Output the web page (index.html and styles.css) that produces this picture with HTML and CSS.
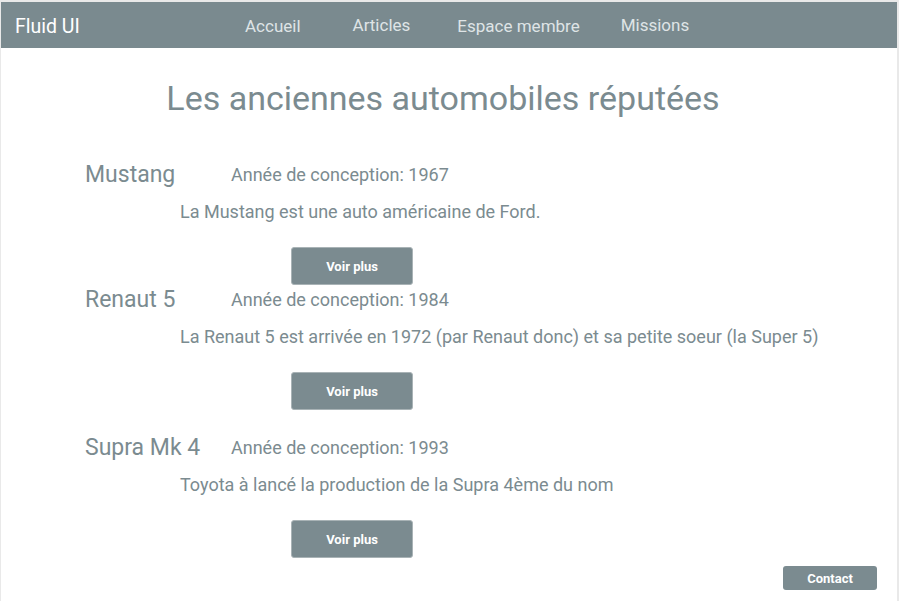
FILE: index.html
```html
<!DOCTYPE html>
<html lang="fr">
<head>
<meta charset="utf-8">
<title>Fluid UI</title>
<link rel="stylesheet" href="styles.css">
</head>
<body>
<div class="page">
  <header class="navbar">
    <div class="brand">Fluid UI</div>
    <nav class="links">
      <a class="link link-accueil" href="#">Accueil</a>
      <a class="link link-articles" href="#">Articles</a>
      <a class="link link-espace" href="#">Espace membre</a>
      <a class="link link-missions" href="#">Missions</a>
    </nav>
  </header>
  <main class="content">
    <h1 class="title">Les anciennes automobiles réputées</h1>
    <section class="car car-first">
      <div class="car-head">
        <h2 class="car-name">Mustang</h2>
        <span class="car-year">Année de conception: 1967</span>
      </div>
      <p class="car-desc">La Mustang est une auto américaine de Ford.</p>
      <button class="btn-more">Voir plus</button>
    </section>
    <section class="car car-second">
      <div class="car-head">
        <h2 class="car-name">Renaut 5</h2>
        <span class="car-year">Année de conception: 1984</span>
      </div>
      <p class="car-desc">La Renaut 5 est arrivée en 1972 (par Renaut donc) et sa petite soeur (la Super 5)</p>
      <button class="btn-more">Voir plus</button>
    </section>
    <section class="car car-third">
      <div class="car-head">
        <h2 class="car-name">Supra Mk 4</h2>
        <span class="car-year">Année de conception: 1993</span>
      </div>
      <p class="car-desc">Toyota à lancé la production de la Supra 4ème du nom</p>
      <button class="btn-more">Voir plus</button>
    </section>
    <div class="footer-row">
      <button class="btn-contact">Contact</button>
    </div>
  </main>
</div>
</body>
</html>
```

FILE: styles.css
```css
html, body {
  margin: 0;
  padding: 0;
}
body {
  background: #e9e9e9;
  font-family: Roboto, "Liberation Sans", sans-serif;
  color: #7b8b90;
}
.page {
  margin: 2px 2px 0 1px;
  background: #ffffff;
  height: 599px;
  overflow: hidden;
}
.navbar {
  height: 46px;
  background: #7a8a8f;
  display: flex;
  align-items: center;
  padding-left: 14px;
}
.brand {
  font-size: 19.5px;
  color: #ffffff;
  width: 230px;
  position: relative;
  top: 1px;
}
.links {
  display: flex;
  align-items: center;
  position: relative;
  top: 1px;
}
.link {
  font-size: 17px;
  color: #dfe4e6;
  text-decoration: none;
}
.link-articles { margin-left: 52px; position: relative; top: -1px; }
.link-espace { margin-left: 47px; }
.link-missions { margin-left: 41px; position: relative; top: -1px; }

.content {
  padding: 0 0 0 84px;
}
.title {
  margin: 30px 0 0 -84px;
  padding-right: 12px;
  text-align: center;
  font-weight: 400;
  font-size: 34px;
  line-height: 40px;
  color: #7b8b90;
}
.car {
  display: flex;
  flex-direction: column;
  align-items: flex-start;
}
.car-first { margin-top: 44px; }
.car-second { margin-top: 2px; }
.car-third { margin-top: 25px; }
.car-head {
  display: flex;
  align-items: baseline;
  height: 26px;
}
.car-name {
  margin: 0;
  width: 146px;
  font-size: 23px;
  font-weight: 400;
  line-height: 26px;
}
.car-year {
  font-size: 18px;
  position: relative;
  top: -1px;
}
.car-desc {
  margin: 12px 0 0 95px;
  font-size: 18px;
  line-height: 24px;
}
.btn-more {
  margin: 23px 0 0 206px;
  width: 122px;
  height: 38px;
  background: #7b8b90;
  border: 1px solid #a9b3b6;
  border-radius: 3px;
  color: #ffffff;
  font-family: Roboto, "Liberation Sans", sans-serif;
  font-weight: 700;
  font-size: 13px;
  padding: 0;
}
.footer-row {
  display: flex;
  justify-content: flex-end;
  padding-right: 20px;
  margin-top: 8px;
}
.btn-contact {
  width: 94px;
  height: 24px;
  background: #7b8b90;
  border: none;
  border-radius: 3px;
  color: #ffffff;
  font-family: Roboto, "Liberation Sans", sans-serif;
  font-weight: 700;
  font-size: 13px;
  padding: 0;
}
```
